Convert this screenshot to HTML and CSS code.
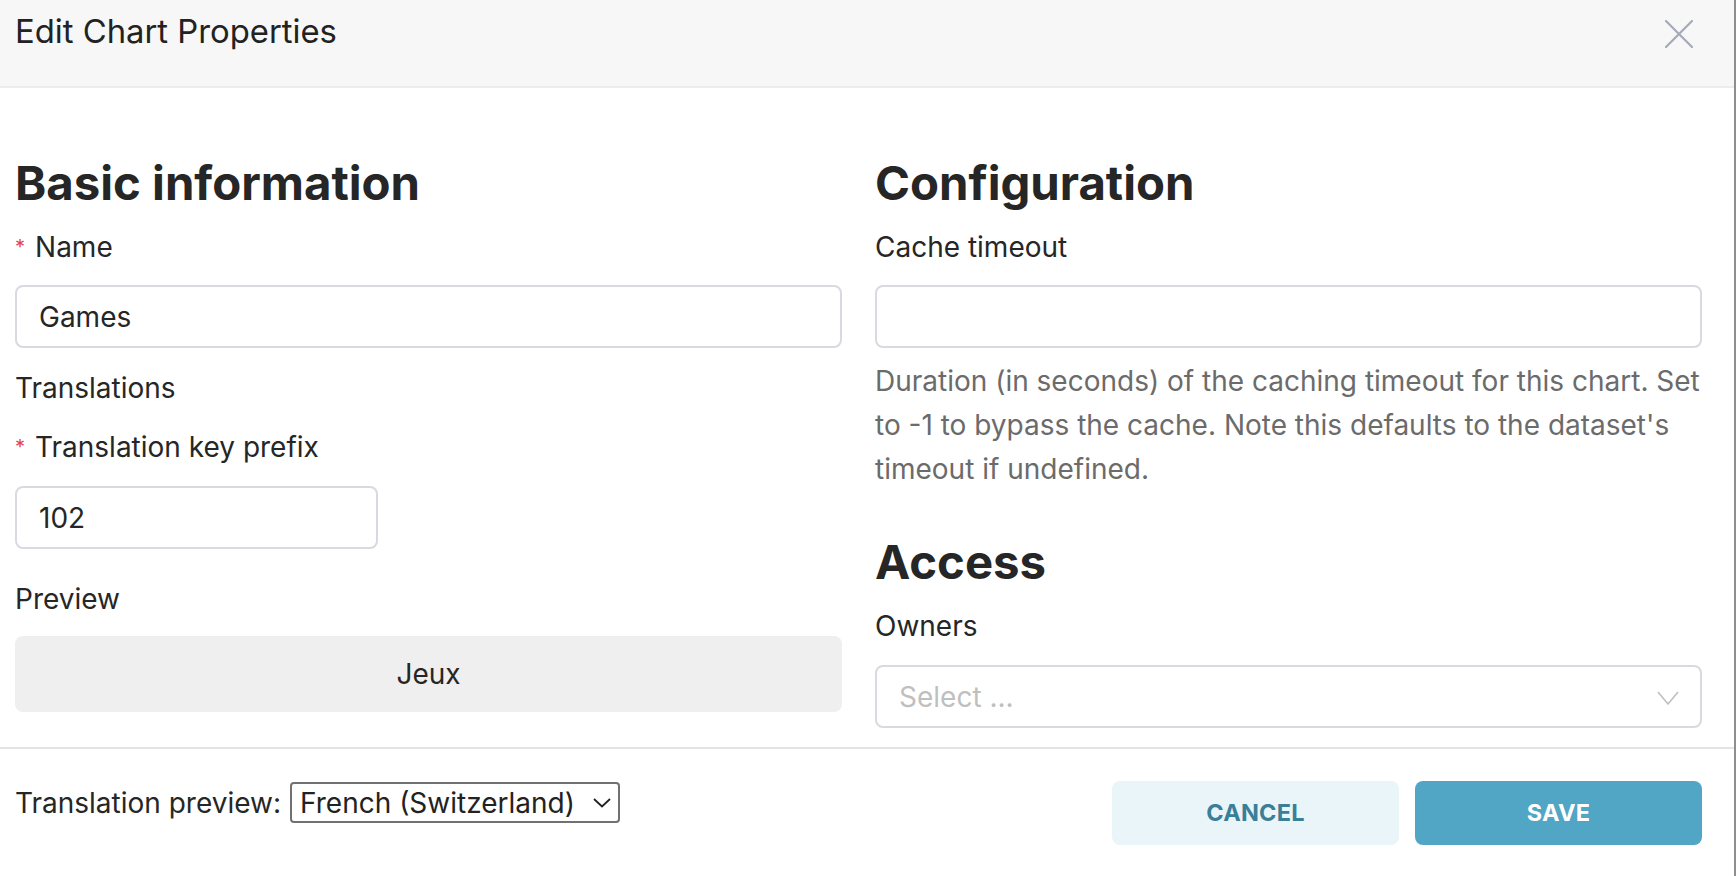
FILE: index.html
```html
<!DOCTYPE html>
<html lang="en">
<head>
<meta charset="utf-8">
<title>Edit Chart Properties</title>
<link rel="stylesheet" href="styles.css">
</head>
<body>
<div class="modal">
  <header class="modal-header">
    <h1 class="modal-title">Edit Chart Properties</h1>
    <svg class="close-icon" width="28" height="28" viewBox="0 0 28 28" aria-label="Close">
      <path d="M1 1 L27 27 M27 1 L1 27" stroke="#a6a9b8" stroke-width="2.2" stroke-linecap="round" fill="none"/>
    </svg>
  </header>

  <main class="modal-body">
    <section class="column">
      <h2 class="section-title">Basic information</h2>
      <label class="field-label label-first"><span class="req">*</span>Name</label>
      <div class="input input-full">Games</div>
      <div class="field-label label-translations">Translations</div>
      <label class="field-label label-prefix"><span class="req">*</span>Translation key prefix</label>
      <div class="input input-short">102</div>
      <div class="field-label label-preview">Preview</div>
      <div class="preview-box">Jeux</div>
    </section>

    <section class="column">
      <h2 class="section-title">Configuration</h2>
      <label class="field-label label-first">Cache timeout</label>
      <div class="input input-full"></div>
      <p class="help-text">Duration (in seconds) of the caching timeout for this chart. Set to -1 to bypass the cache. Note this defaults to the dataset's timeout if undefined.</p>
      <h2 class="section-title section-access">Access</h2>
      <label class="field-label label-first">Owners</label>
      <div class="input select-input">
        <span class="placeholder">Select ...</span>
        <svg class="select-chevron" width="22" height="14" viewBox="0 0 22 14">
          <path d="M1 1 L11 13 L21 1" stroke="#bfbfbf" stroke-width="1.6" fill="none" stroke-linejoin="round"/>
        </svg>
      </div>
    </section>
  </main>

  <footer class="modal-footer">
    <div class="preview-lang">
      <span class="preview-lang-label">Translation preview:</span>
      <div class="native-select">
        <span>French (Switzerland)</span>
        <svg class="native-chevron" width="18" height="10" viewBox="0 0 18 10">
          <path d="M1 1 L9 8.5 L17 1" stroke="#222" stroke-width="1.8" fill="none"/>
        </svg>
      </div>
    </div>
    <div class="actions">
      <button class="btn btn-cancel">CANCEL</button>
      <button class="btn btn-save">SAVE</button>
    </div>
  </footer>
</div>
</body>
</html>
```

FILE: styles.css
```css
* { box-sizing: border-box; }

html, body {
  margin: 0;
  padding: 0;
  background: #ffffff;
}

body {
  width: 1736px;
  height: 876px;
  overflow: hidden;
  font-family: Inter, "Noto Sans", sans-serif;
  color: #262626;
}

.modal {
  width: 1736px;
  height: 876px;
  display: flex;
  flex-direction: column;
  border-right: 2px solid #8e8e8e;
  background: #ffffff;
}

.modal-header {
  height: 88px;
  flex: 0 0 88px;
  background: #f7f7f7;
  border-bottom: 2px solid #ececec;
  display: flex;
  align-items: flex-start;
  justify-content: space-between;
  padding: 11px 41px 0 15px;
}

.modal-title {
  margin: 0;
  font-size: 32.8px;
  line-height: 40px;
  font-weight: 400;
  color: #222222;
}

.close-icon {
  margin-top: 9px;
  display: block;
}

.modal-body {
  flex: 1 1 auto;
  display: grid;
  grid-template-columns: 1fr 1fr;
  column-gap: 33px;
  padding: 66px 32px 0 15px;
  border-bottom: 2px solid #e3e3e3;
}

.column {
  display: flex;
  flex-direction: column;
  align-items: stretch;
}

.section-title {
  margin: 0;
  font-size: 47.3px;
  line-height: 58px;
  font-weight: 700;
  color: #262626;
}

.section-access {
  margin-top: 42px;
}

.field-label {
  display: block;
  font-size: 28px;
  line-height: 36px;
  color: #262626;
}

.label-first { margin-top: 17px; }
.label-translations { margin-top: 22px; }
.label-prefix { margin-top: 23px; }
.label-preview { margin-top: 32px; }

.req {
  color: #e04355;
  font-size: 20px;
  line-height: 0;
  margin-right: 10px;
  position: relative;
  top: -3px;
}

.input {
  margin-top: 20px;
  height: 63px;
  border: 2px solid #d9dae0;
  border-radius: 8px;
  padding: 0 22px;
  display: flex;
  align-items: center;
  font-size: 28px;
  color: #262626;
  background: #ffffff;
}

.input-short {
  width: 363px;
  margin-top: 21px;
}

.select-input {
  margin-top: 21px;
  justify-content: space-between;
  padding-right: 21px;
}

.placeholder {
  color: #bfbfbf;
}

.select-chevron {
  display: block;
  margin-top: 2px;
}

.preview-box {
  margin-top: 19px;
  height: 76px;
  background: #efefef;
  border-radius: 8px;
  display: flex;
  align-items: center;
  justify-content: center;
  font-size: 28px;
  color: #262626;
}

.help-text {
  margin: 11px 0 0 0;
  font-size: 28px;
  line-height: 44px;
  color: #6b6b6b;
}

.modal-footer {
  flex: 0 0 127px;
  display: flex;
  align-items: center;
  justify-content: space-between;
  padding: 0 32px 0 15px;
}

.preview-lang {
  display: flex;
  align-items: center;
  gap: 9px;
  margin-bottom: 20px;
  font-size: 28px;
  color: #262626;
}

.native-select {
  width: 330px;
  height: 41px;
  border: 2px solid #717171;
  border-radius: 4px;
  display: flex;
  align-items: center;
  justify-content: space-between;
  padding: 0 7px 0 8px;
  color: #222222;
}

.native-chevron {
  display: block;
}

.actions {
  display: flex;
  gap: 16px;
}

.btn {
  width: 287px;
  height: 64px;
  border: none;
  border-radius: 8px;
  font-family: Inter, "Noto Sans", sans-serif;
  font-size: 23.5px;
  font-weight: 700;
  letter-spacing: 0.2px;
  cursor: pointer;
}

.btn-cancel {
  background: #e9f5f8;
  color: #3a7f98;
}

.btn-save {
  background: #51a5c5;
  color: #ffffff;
}
```
